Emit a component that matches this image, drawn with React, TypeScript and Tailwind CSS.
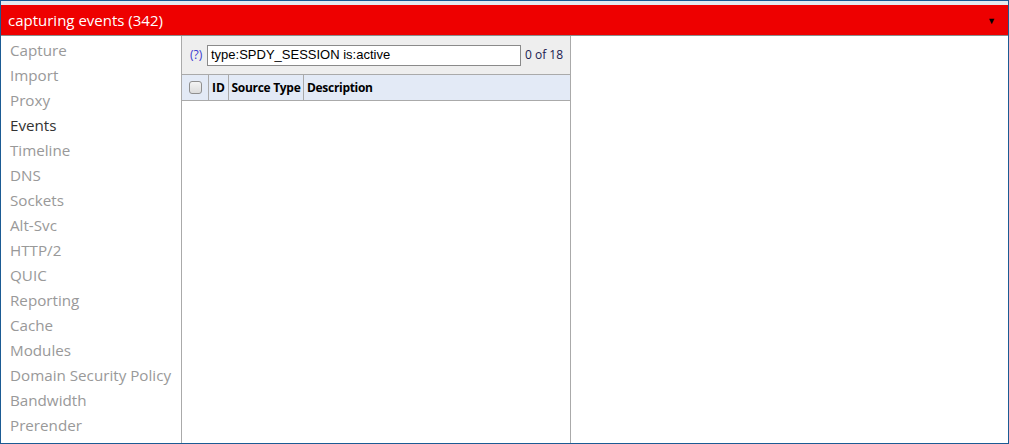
import React from "react";

const tabs = [
  "Capture",
  "Import",
  "Proxy",
  "Events",
  "Timeline",
  "DNS",
  "Sockets",
  "Alt-Svc",
  "HTTP/2",
  "QUIC",
  "Reporting",
  "Cache",
  "Modules",
  "Domain Security Policy",
  "Bandwidth",
  "Prerender",
];

const uiFont = { fontFamily: '"Open Sans", "Noto Sans", sans-serif' };

export default function App() {
  return (
    <div
      className="w-[1009px] h-[444px] border border-[#1b5b94] bg-white flex flex-col overflow-hidden"
      style={uiFont}
    >
      {/* status bar */}
      <div className="h-[4px] bg-[#e4eaef]" />
      <div className="h-[31px] bg-[#ee0000] border-b border-[#8c8c8c] flex items-center justify-between pl-[7px] pr-[12px]">
        <span className="text-white text-[15px] leading-none">capturing events (342)</span>
        <span className="text-black text-[9px] leading-none">▼</span>
      </div>

      <div className="flex flex-1 min-h-0">
        {/* tab list */}
        <div className="w-[181px] shrink-0 border-r border-[#aaaaaa] pt-[2px] pl-[9px]">
          {tabs.map((t) => (
            <div
              key={t}
              className={
                "h-[25px] flex items-center text-[15.2px] whitespace-nowrap " +
                (t === "Events" ? "text-[#333333]" : "text-[#999999]")
              }
            >
              {t}
            </div>
          ))}
        </div>

        {/* events view */}
        <div className="w-[389px] shrink-0 border-r border-[#aaaaaa] flex flex-col">
          <div className="h-[39px] bg-[#eeeeee] border-b border-[#aaaaaa] flex items-center pl-[8px] gap-[4px]">
            <span className="text-[12px] text-[#3a3ad0] leading-none w-[13px]">(?)</span>
            <div
              className="w-[314px] h-[21px] border border-[#8a8a8a] bg-white flex items-center px-[3px] text-[13px] text-black"
              style={{ fontFamily: '"Liberation Sans", Arial, sans-serif' }}
            >
              type:SPDY_SESSION is:active
            </div>
            <span className="text-[12px] text-[#1a1a50]">0 of 18</span>
          </div>
          <div className="h-[26px] bg-[#e3eaf6] border-b border-[#aaaaaa] flex text-[12px] font-bold text-black">
            <div className="w-[27px] border-r border-[#aaaaaa] flex items-center justify-center">
              <div className="w-[13px] h-[13px] rounded-[3px] border border-[#8f8f8f] bg-gradient-to-b from-[#f4f4f4] to-[#dcdcdc]" />
            </div>
            <div className="w-[20px] border-r border-[#aaaaaa] flex items-center justify-center">ID</div>
            <div className="w-[75px] border-r border-[#aaaaaa] flex items-center justify-center tracking-[-0.3px]">
              Source Type
            </div>
            <div className="flex items-center pl-[3px] tracking-[-0.3px]">Description</div>
          </div>
          <div className="flex-1 bg-white" />
        </div>

        {/* details */}
        <div className="flex-1 bg-white" />
      </div>
    </div>
  );
}
